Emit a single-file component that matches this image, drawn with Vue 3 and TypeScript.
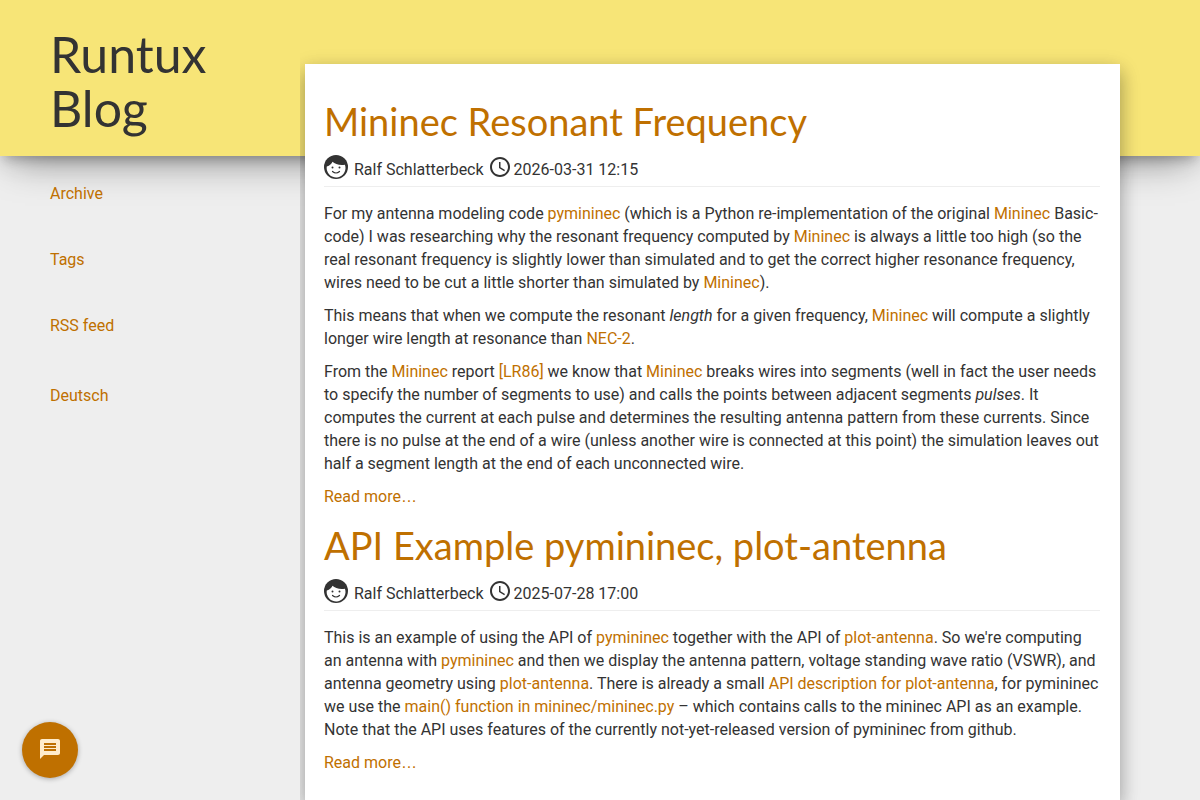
<script setup lang="ts">
interface Segment {
  text: string
  kind?: 'link' | 'em'
}
interface Post {
  title: string
  author: string
  date: string
  paragraphs: Segment[][]
}

const link = (text: string): Segment => ({ text, kind: 'link' })
const em = (text: string): Segment => ({ text, kind: 'em' })
const t = (text: string): Segment => ({ text })

const navItems: string[] = ['Archive', 'Tags', 'RSS feed']

const posts: Post[] = [
  {
    title: 'Mininec Resonant Frequency',
    author: 'Ralf Schlatterbeck',
    date: '2026-03-31 12:15',
    paragraphs: [
      [
        t('For my antenna modeling code '), link('pymininec'),
        t(' (which is a Python re-implementation of the original '), link('Mininec'),
        t(' Basic-code) I was researching why the resonant frequency computed by '), link('Mininec'),
        t(' is always a little too high (so the real resonant frequency is slightly lower than simulated and to get the correct higher resonance frequency, wires need to be cut a little shorter than simulated by '),
        link('Mininec'), t(').'),
      ],
      [
        t('This means that when we compute the resonant '), em('length'),
        t(' for a given frequency, '), link('Mininec'),
        t(' will compute a slightly longer wire length at resonance than '), link('NEC-2'), t('.'),
      ],
      [
        t('From the '), link('Mininec'), t(' report '), link('[LR86]'), t(' we know that '), link('Mininec'),
        t(' breaks wires into segments (well in fact the user needs to specify the number of segments to use) and calls the points between adjacent segments '),
        em('pulses'),
        t('. It computes the current at each pulse and determines the resulting antenna pattern from these currents. Since there is no pulse at the end of a wire (unless another wire is connected at this point) the simulation leaves out half a segment length at the end of each unconnected wire.'),
      ],
    ],
  },
  {
    title: 'API Example pymininec, plot-antenna',
    author: 'Ralf Schlatterbeck',
    date: '2025-07-28 17:00',
    paragraphs: [
      [
        t('This is an example of using the API of '), link('pymininec'),
        t(' together with the API of '), link('plot-antenna'),
        t(". So we're computing an antenna with "), link('pymininec'),
        t(' and then we display the antenna pattern, voltage standing wave ratio (VSWR), and antenna geometry using '),
        link('plot-antenna'), t('. There is already a small '), link('API description for plot-antenna'),
        t(', for pymininec we use the '), link('main() function in mininec/mininec.py'),
        t(' – which contains calls to the mininec API as an example. Note that the API uses features of the currently not-yet-released version of pymininec from github.'),
      ],
    ],
  },
]
</script>

<template>
  <div class="page">
    <div class="banner" aria-hidden="true"></div>
    <aside class="side">
      <h1 class="brand"><a href="#">Runtux Blog</a></h1>
      <nav class="nav">
        <a v-for="item in navItems" :key="item" href="#">{{ item }}</a>
        <a class="language" href="#" lang="de">Deutsch</a>
      </nav>
    </aside>
    <div class="frame">
      <main class="content">
        <article v-for="post in posts" :key="post.title" class="post">
          <h2><a href="#">{{ post.title }}</a></h2>
          <div class="meta">
            <svg class="face" viewBox="0 0 24 24" aria-hidden="true">
              <circle cx="12" cy="12" r="12" fill="#333" />
              <path d="M2.800 11.600C5.800 10.600 7.600 9 8.500 6.800C11 9.200 15.500 10.700 20.900 9.800A9.400 9.400 0 1 1 2.800 11.600Z" fill="#fff" />
              <circle cx="8.500" cy="12.500" r="1" fill="#333" />
              <circle cx="15.500" cy="12.500" r="1" fill="#333" />
              <path d="M8.500 16.500Q12 19.500 15.500 16.500" fill="none" stroke="#333" stroke-width="1.200" stroke-linecap="round" />
            </svg>
            <span class="author">{{ post.author }}</span>
            <svg class="clock" viewBox="2 2 20 20" aria-hidden="true">
              <path fill="#333" d="M11.990 2C6.470 2 2 6.480 2 12s4.470 10 9.990 10C17.520 22 22 17.520 22 12S17.520 2 11.990 2zM12 20c-4.420 0-8-3.580-8-8s3.580-8 8-8 8 3.580 8 8-3.580 8-8 8zm.5-13H11v6l5.250 3.150.75-1.230-4.500-2.670z" />
            </svg>
            <time>{{ post.date }}</time>
          </div>
          <p v-for="(para, i) in post.paragraphs" :key="i">
            <template v-for="(seg, j) in para" :key="j"><a v-if="seg.kind === 'link'" href="#">{{ seg.text }}</a><em v-else-if="seg.kind === 'em'">{{ seg.text }}</em><template v-else>{{ seg.text }}</template></template>
          </p>
          <p><a href="#">Read more<span class="dots">…</span></a></p>
        </article>
      </main>
    </div>
    <button class="chat" type="button" aria-label="Comments">
      <svg viewBox="0 0 24 24" aria-hidden="true">
        <path fill="#ffeccb" d="M20 2H4c-1.100 0-1.990.9-1.990 2L2 22l4-4h14c1.100 0 2-.9 2-2V4c0-1.100-.9-2-2-2zM6 9h12v2H6V9zm12 5H6v-2h12v2zm0-6H6V6h12v2z" />
      </svg>
    </button>
  </div>
</template>

<style>
body {
  margin: 0;
  background: #eee;
}
</style>

<style scoped>
.page {
  position: relative;
  display: grid;
  grid-template-columns: 300px minmax(0, 1fr);
  min-height: 100vh;
  padding-right: 80px;
  box-sizing: border-box;
  font: 16px/23px Roboto, "Liberation Sans", sans-serif;
  color: #333;
}
a {
  color: #bf7000;
  text-decoration: none;
}
.banner {
  position: absolute;
  top: 0;
  left: 0;
  right: 0;
  height: 156px;
  background: #f7e577;
  box-shadow: 0 16px 38px -12px rgba(0, 0, 0, 0.4), 0 4px 25px 0 rgba(0, 0, 0, 0.1), 0 8px 10px -5px rgba(0, 0, 0, 0.2);
}
.side {
  position: relative;
  padding: 27px 50px 0;
}
.brand {
  margin: 0;
  font: 400 50px/54px Lato, sans-serif;
}
.brand a {
  color: #333;
}
.nav {
  display: flex;
  flex-direction: column;
  align-items: flex-start;
  gap: 43px;
  padding-top: 47px;
}
.nav .language {
  margin-top: 4px;
}
.frame {
  position: relative;
  margin-top: 64px;
  padding-left: 5px;
  clip-path: inset(-20px -30px 0 0);
}
.content {
  min-height: 100%;
  box-sizing: border-box;
  padding: 35px 20px 0 19px;
  background: #fff;
  box-shadow: 0 8px 17px 0 rgba(0, 0, 0, 0.2), 0 6px 20px 0 rgba(0, 0, 0, 0.19);
}
h2 {
  margin: 0 0 12px;
  font: 400 38px/44px Lato, sans-serif;
}
.meta {
  display: flex;
  align-items: center;
  height: 31px;
  margin-bottom: 15px;
  border-bottom: 1px solid #eee;
}
.face {
  width: 24px;
  height: 24px;
  margin: 0 6px 7px 0;
}
.clock {
  width: 20px;
  height: 20px;
  margin: 0 4px 7px 6px;
}
.author,
time {
  margin-bottom: 3px;
}
p {
  margin: 0 0 10px;
}
.dots {
  font-family: "Liberation Sans", sans-serif;
}
.post + .post {
  margin-top: 15px;
}
.chat {
  position: fixed;
  left: 22px;
  bottom: 22px;
  display: grid;
  place-items: center;
  width: 56px;
  height: 56px;
  padding: 0 0 2px;
  border: 0;
  border-radius: 50%;
  background: #bf7000;
  box-shadow: 0 1px 5px rgba(0, 0, 0, 0.3);
}
.chat svg {
  width: 24px;
  height: 24px;
}
</style>
